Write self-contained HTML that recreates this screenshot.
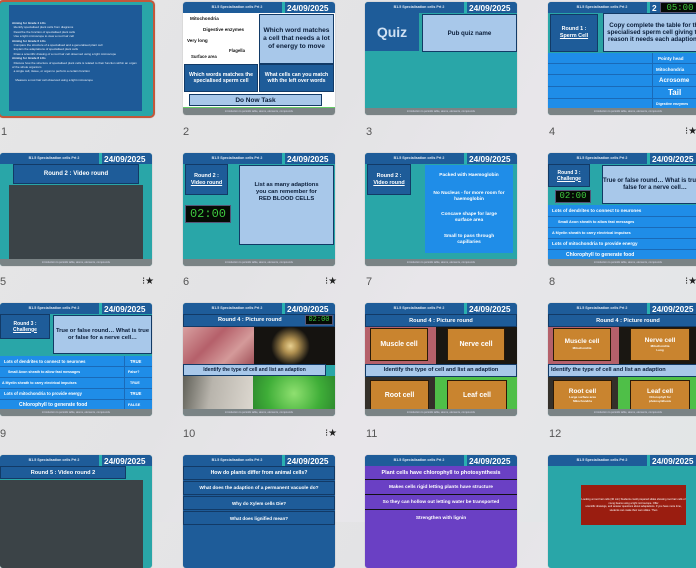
<!DOCTYPE html>
<html><head><meta charset="utf-8"><style>
*{margin:0;padding:0;box-sizing:border-box}
body{width:696px;height:522px;overflow:hidden;background:linear-gradient(120deg,#e6e6e6 0%,#e3e3e5 40%,#e8e6ea 60%,#e2e6e6 100%);font-family:"Liberation Sans",sans-serif;position:relative}
.s{position:absolute;width:152px;height:113px;border-radius:3px;overflow:hidden;background:#29a6a8;box-shadow:0 0 1px rgba(0,0,0,.3)}
.a{position:absolute}
.hd{position:absolute;left:0;top:0;width:100%;height:11px;background:#1e5c99}
.hd .t{position:absolute;left:14px;top:3px;font-size:3.6px;font-weight:bold;color:#dfe8f4;width:80px;text-align:center}
.hd .st{position:absolute;left:99px;top:0;width:3px;height:11px;background:#2ab0b0}
.hd .d{position:absolute;left:104px;top:1px;font-size:8.3px;font-weight:bold;color:#fff}
.ft{position:absolute;left:0;bottom:0;width:100%;height:7px;background:#7a8385;font-size:2.6px;color:#dde;text-align:center;line-height:7px}
.db{background:#1e5c99;color:#fff;font-weight:bold;text-align:center;border:1px solid #123a66}
.lb{background:#a8c8ea;color:#0b1e3a;font-weight:bold;text-align:center;border:1px solid #123a66}
.bb{background:#1f8de8;color:#fff;font-weight:bold;text-align:center}
.or{background:#c9842f;color:#fff;font-weight:bold;text-align:center;border:1px solid #2a1a08;display:flex;flex-direction:column;justify-content:center;align-items:center}
.num{position:absolute;font-size:11px;color:#555}
.star{position:absolute;font-size:10px;color:#222;white-space:nowrap}
.tm{background:#050a05;color:#3fc93f;font-family:"Liberation Mono",monospace;text-align:center;border:1px solid #557}
.c{display:flex;align-items:center;justify-content:center;flex-direction:column}
.row{position:absolute;left:0;width:152px;border-bottom:1px solid #1a6ab8;color:#fff;font-weight:bold;white-space:nowrap}
</style></head><body>

<!-- 1 -->
<div class="s" style="left:-2px;top:0;width:157px;height:118px;border:2px solid #c4573a;border-radius:5px;background:#29a6a8">
 <div class="a" style="left:9px;top:3px;width:133px;height:106px;background:#1e5a98;color:#e8eef8;font-size:3px;line-height:4.4px;padding:16px 2px 0 3px">
 <b>Aiming for Grade 4 LOs</b><br>&nbsp;&nbsp;Identify specialised plant cells from diagrams<br>&nbsp;&nbsp;Describe the function of specialised plant cells<br>&nbsp;&nbsp;Use a light microscope to view a root hair cell<br><b>Aiming for Grade 6 LOs</b><br>&nbsp;&nbsp;Compare the structure of a specialised and a generalised plant cell<br>&nbsp;&nbsp;Explain the adaptations of specialised plant cells<br>&nbsp;&nbsp;Draw a scientific drawing of a root hair cell observed using a light microscope<br><b>Aiming for Grade 8 LOs</b><br>&nbsp;&nbsp;Discuss how the structure of specialised plant cells is related to their function within an organ of the whole organism<br>&nbsp;&nbsp;a single cell, tissue, or organ to perform a certain function<br><br>&nbsp;&nbsp;&nbsp;&nbsp;Measure a root hair cell observed using a light microscope
 </div>
</div>
<div class="num" style="left:1px;top:126px">1</div>

<!-- 2 -->
<div class="s" style="left:183px;top:2px;background:#fff">
 <div class="hd"><div class="t">B1.5 Specialisation cells Prt 2</div><div class="st"></div><div class="d">24/09/2025</div></div>
 <div class="a" style="left:7px;top:14px;font-size:4.6px;font-weight:bold;color:#111">Mitochondria</div>
 <div class="a" style="left:20px;top:25px;font-size:4.6px;font-weight:bold;color:#111">Digestive enzymes</div>
 <div class="a" style="left:4px;top:36px;font-size:4.6px;font-weight:bold;color:#111">Very long</div>
 <div class="a" style="left:46px;top:46px;font-size:4.3px;font-weight:bold;color:#111">Flagella</div>
 <div class="a" style="left:8px;top:52px;font-size:4.3px;font-weight:bold;color:#111">Surface area</div>
 <div class="a lb c" style="left:76px;top:12px;width:75px;height:50px;font-size:6.6px;line-height:8px;padding:0 3px">Which word matches a cell that needs a lot of energy to move</div>
 <div class="a db c" style="left:1px;top:62px;width:74px;height:28px;font-size:5.2px;line-height:6px">Which words matches the specialised sperm cell</div>
 <div class="a db c" style="left:76px;top:62px;width:75px;height:28px;font-size:5.2px;line-height:6px">What cells can you match with the left over words</div>
 <div class="a lb c" style="left:6px;top:92px;width:133px;height:12px;font-size:6.5px">Do Now Task</div>
 <div class="a" style="left:0;top:105px;width:152px;height:1px;background:#6c6"></div>
 <div class="ft">introduction to periodic table, atoms, elements, compounds</div>
</div>
<div class="num" style="left:183px;top:126px">2</div>

<!-- 3 -->
<div class="s" style="left:365px;top:2px">
 <div class="hd"><div class="t">B1.5 Specialisation cells Prt 2</div><div class="st"></div><div class="d">24/09/2025</div></div>
 <div class="a c" style="left:0;top:11px;width:54px;height:38px;background:#1e5c99;color:#cfe0f2;font-weight:bold;font-size:14px">Quiz</div>
 <div class="a" style="left:54px;top:11px;width:4px;height:38px;background:#2aa3a3"></div>
 <div class="a lb c" style="left:57px;top:12px;width:95px;height:38px;font-size:6.2px">Pub quiz name</div>
 <div class="ft">introduction to periodic table, atoms, elements, compounds</div>
</div>
<div class="num" style="left:366px;top:126px">3</div>

<!-- 4 -->
<div class="s" style="left:548px;top:2px;width:160px">
 <div class="hd"><div class="t">B1.5 Specialisation cells Prt 2</div><div class="st"></div><div class="d">2</div>
 <div class="a tm" style="left:112px;top:0;width:40px;height:11px;font-size:9px;line-height:10px">05:00</div></div>
 <div class="a db c" style="left:2px;top:12px;width:48px;height:38px;font-size:5.4px;line-height:7px">Round 1 :<br><u>Sperm Cell</u></div>
 <div class="a" style="left:51px;top:11px;width:4px;height:40px;background:#2aa3a3"></div>
 <div class="a lb c" style="left:55px;top:11px;width:105px;height:39px;font-size:6.2px;line-height:7px">Copy complete the table for the specialised sperm cell giving the reason it needs each adaption…</div>
 <div class="a" style="left:0;top:51px;width:160px;height:57px;background:#1f8de8"></div>
 <div class="row" style="top:51px;height:11px"><span class="a" style="left:110px;top:3px;font-size:4.5px">Pointy head</span></div>
 <div class="row" style="top:62px;height:11px"><span class="a" style="left:108px;top:3px;font-size:4.5px">Mitochondria</span></div>
 <div class="row" style="top:73px;height:12px"><span class="a" style="left:111px;top:2px;font-size:6.2px">Acrosome</span></div>
 <div class="row" style="top:85px;height:12px"><span class="a" style="left:120px;top:1px;font-size:8px">Tail</span></div>
 <div class="row" style="top:97px;height:11px;border:none"><span class="a" style="left:108px;top:3px;font-size:3.6px">Digestive enzymes</span></div>
 <div class="a" style="left:104px;top:51px;width:1px;height:57px;background:#1a6ab8"></div>
 <div class="ft">introduction to periodic table, atoms, elements, compounds</div>
</div>
<div class="num" style="left:549px;top:126px">4</div>
<div class="star" style="left:685px;top:126px">⁝★</div>

<!-- 5 -->
<div class="s" style="left:0;top:153px">
 <div class="hd"><div class="t">B1.5 Specialisation cells Prt 2</div><div class="st"></div><div class="d">24/09/2025</div></div>
 <div class="a db c" style="left:13px;top:11px;width:126px;height:20px;font-size:6px">Round 2 : Video round</div>
 <div class="a" style="left:9px;top:32px;width:134px;height:76px;background:#3b4347"></div>
 <div class="ft">introduction to periodic table, atoms, elements, compounds</div>
</div>
<div class="num" style="left:0;top:276px">5</div>
<div class="star" style="left:142px;top:276px">⁝★</div>

<!-- 6 -->
<div class="s" style="left:183px;top:153px">
 <div class="hd"><div class="t">B1.5 Specialisation cells Prt 2</div><div class="st"></div><div class="d">24/09/2025</div></div>
 <div class="a db c" style="left:2px;top:11px;width:43px;height:31px;font-size:5.4px;line-height:7px">Round 2 :<br><u>Video round</u></div>
 <div class="a tm" style="left:2px;top:52px;width:46px;height:18px;font-size:12px;line-height:16px">02:00</div>
 <div class="a lb c" style="left:56px;top:12px;width:95px;height:80px;font-size:5.8px;line-height:7px;padding:0 12px 26px">List as many adaptions you can remember for RED BLOOD CELLS</div>
 <div class="ft">introduction to periodic table, atoms, elements, compounds</div>
</div>
<div class="num" style="left:183px;top:276px">6</div>
<div class="star" style="left:325px;top:276px">⁝★</div>

<!-- 7 -->
<div class="s" style="left:365px;top:153px">
 <div class="hd"><div class="t">B1.5 Specialisation cells Prt 2</div><div class="st"></div><div class="d">24/09/2025</div></div>
 <div class="a db c" style="left:2px;top:11px;width:44px;height:31px;font-size:5.4px;line-height:7px">Round 2 :<br><u>Video round</u></div>
 <div class="a bb" style="left:60px;top:12px;width:88px;height:88px"></div>
 <div class="a c" style="left:60px;top:14px;width:88px;height:16px;font-size:4.8px;color:#fff;font-weight:bold">Packed with Haemoglobin</div>
 <div class="a c" style="left:60px;top:36px;width:88px;height:16px;font-size:4.8px;color:#fff;font-weight:bold;line-height:6px;text-align:center">No Nucleus - for more room for haemoglobin</div>
 <div class="a c" style="left:60px;top:57px;width:88px;height:16px;font-size:4.8px;color:#fff;font-weight:bold;line-height:6px;text-align:center;padding:0 8px">Concave shape for large surface area</div>
 <div class="a c" style="left:60px;top:79px;width:88px;height:16px;font-size:4.8px;color:#fff;font-weight:bold;line-height:6px;text-align:center;padding:0 12px">Small to pass through capillaries</div>
 <div class="ft">introduction to periodic table, atoms, elements, compounds</div>
</div>
<div class="num" style="left:366px;top:276px">7</div>

<!-- 8 -->
<div class="s" style="left:548px;top:153px;width:160px">
 <div class="hd"><div class="t">B1.5 Specialisation cells Prt 2</div><div class="st"></div><div class="d">24/09/2025</div></div>
 <div class="a db c" style="left:0;top:11px;width:42px;height:23px;font-size:5px;line-height:6px">Round 3 :<br><u>Challenge</u></div>
 <div class="a tm" style="left:7px;top:37px;width:36px;height:13px;font-size:9px;line-height:11px">02:00</div>
 <div class="a lb c" style="left:54px;top:12px;width:106px;height:39px;font-size:6px;line-height:7px">True or false round… What is true or false for a nerve cell…</div>
 <div class="a" style="left:0;top:52px;width:160px;height:56px;background:#1f8de8"></div>
 <div class="row" style="top:52px;height:12px;font-size:4.6px;padding:3px 0 0 4px">Lots of dendrites to connect to neurones</div>
 <div class="row" style="top:64px;height:11px;font-size:3.8px;padding:3px 0 0 10px">Small Axon sheath to allow fast messages</div>
 <div class="row" style="top:75px;height:11px;font-size:3.8px;padding:3px 0 0 4px">A Myelin sheath to carry electrical impulses</div>
 <div class="row" style="top:86px;height:11px;font-size:4.6px;padding:2px 0 0 4px">Lots of mitochondria to provide energy</div>
 <div class="row" style="top:97px;height:11px;font-size:5px;padding:2px 0 0 18px;border:none">Chlorophyll to generate food</div>
 <div class="ft">introduction to periodic table, atoms, elements, compounds</div>
</div>
<div class="num" style="left:549px;top:276px">8</div>
<div class="star" style="left:685px;top:276px">⁝★</div>

<!-- 9 -->
<div class="s" style="left:0;top:303px">
 <div class="hd"><div class="t">B1.5 Specialisation cells Prt 2</div><div class="st"></div><div class="d">24/09/2025</div></div>
 <div class="a db c" style="left:0;top:11px;width:50px;height:25px;font-size:5px;line-height:6px">Round 3 :<br><u>Challenge</u></div>
 <div class="a lb c" style="left:53px;top:12px;width:99px;height:39px;font-size:5.8px;line-height:7px">True or false round… What is true or false for a nerve cell…</div>
 <div class="a" style="left:0;top:53px;width:152px;height:55px;background:#1f8de8"></div>
 <div class="row" style="top:53px;height:11px;font-size:4.2px;padding:3px 0 0 4px">Lots of dendrites to connect to neurones<span class="a" style="left:130px">TRUE</span></div>
 <div class="row" style="top:64px;height:11px;font-size:3.6px;padding:3px 0 0 8px">Small Axon sheath to allow fast messages<span class="a" style="left:128px">False?</span></div>
 <div class="row" style="top:75px;height:11px;font-size:3.6px;padding:3px 0 0 2px">A Myelin sheath to carry electrical impulses<span class="a" style="left:130px">TRUE</span></div>
 <div class="row" style="top:86px;height:11px;font-size:4.2px;padding:2px 0 0 4px">Lots of mitochondria to provide energy<span class="a" style="left:130px">TRUE</span></div>
 <div class="row" style="top:97px;height:11px;font-size:5px;padding:2px 0 0 19px;border:none">Chlorophyll to generate food<span class="a" style="left:128px;font-size:3.8px;top:3px">FALSE</span></div>
 <div class="a" style="left:124px;top:53px;width:1px;height:55px;background:#1a6ab8"></div>
 <div class="ft">introduction to periodic table, atoms, elements, compounds</div>
</div>
<div class="num" style="left:0;top:428px">9</div>

<!-- 10 -->
<div class="s" style="left:183px;top:303px">
 <div class="hd"><div class="t">B1.5 Specialisation cells Prt 2</div><div class="st"></div><div class="d">24/09/2025</div></div>
 <div class="a db" style="left:0;top:11px;width:152px;height:13px;font-size:5.6px;line-height:11px;text-align:left;padding-left:34px">Round 4 : Picture round</div>
 <div class="a tm" style="left:122px;top:12px;width:28px;height:10px;font-size:7px;line-height:8px">02:00</div>
 <div class="a" style="left:0;top:24px;width:71px;height:38px;background:linear-gradient(135deg,#d8a0a0,#b5606a 40%,#d49a9a 70%,#a05058)"></div>
 <div class="a" style="left:71px;top:24px;width:81px;height:38px;background:radial-gradient(circle at 45% 50%,#e8d090 0,#b09050 15%,#151310 40%)"></div>
 <div class="a lb" style="left:0;top:61px;width:143px;height:12px;font-size:5px;line-height:10px">Identify the type of cell and list an adaption</div>
 <div class="a" style="left:0;top:73px;width:70px;height:35px;background:linear-gradient(100deg,#606058,#b8b4ac 40%,#ddd8d0)"></div>
 <div class="a" style="left:70px;top:73px;width:82px;height:35px;background:radial-gradient(circle,#8fe070,#3fae38 60%,#2e8a2e)"></div>
 <div class="ft">introduction to periodic table, atoms, elements, compounds</div>
</div>
<div class="num" style="left:183px;top:428px">10</div>
<div class="star" style="left:325px;top:428px">⁝★</div>

<!-- 11 -->
<div class="s" style="left:365px;top:303px">
 <div class="hd"><div class="t">B1.5 Specialisation cells Prt 2</div><div class="st"></div><div class="d">24/09/2025</div></div>
 <div class="a db c" style="left:0;top:11px;width:152px;height:13px;font-size:5.6px">Round 4 : Picture round</div>
 <div class="a" style="left:0;top:24px;width:71px;height:38px;background:#b5606a"></div>
 <div class="a" style="left:71px;top:24px;width:81px;height:38px;background:#1a1712"></div>
 <div class="a or" style="left:5px;top:25px;width:58px;height:33px;font-size:7px">Muscle cell</div>
 <div class="a or" style="left:82px;top:25px;width:58px;height:33px;font-size:7px">Nerve cell</div>
 <div class="a lb" style="left:0;top:61px;width:152px;height:13px;font-size:5.6px;line-height:11px">Identify the type of cell and list an adaption</div>
 <div class="a" style="left:0;top:74px;width:70px;height:34px;background:#34302a"></div>
 <div class="a" style="left:70px;top:74px;width:82px;height:34px;background:#4fbf48"></div>
 <div class="a or" style="left:5px;top:77px;width:59px;height:31px;font-size:7px">Root cell</div>
 <div class="a or" style="left:82px;top:77px;width:60px;height:31px;font-size:7px">Leaf cell</div>
 <div class="ft">introduction to periodic table, atoms, elements, compounds</div>
</div>
<div class="num" style="left:366px;top:428px">11</div>

<!-- 12 -->
<div class="s" style="left:548px;top:303px;width:160px">
 <div class="hd"><div class="t">B1.5 Specialisation cells Prt 2</div><div class="st"></div><div class="d">24/09/2025</div></div>
 <div class="a db c" style="left:0;top:11px;width:160px;height:13px;font-size:5.6px">Round 4 : Picture round</div>
 <div class="a" style="left:0;top:24px;width:71px;height:38px;background:#b5606a"></div>
 <div class="a" style="left:71px;top:24px;width:89px;height:38px;background:#1a1712"></div>
 <div class="a or" style="left:5px;top:25px;width:58px;height:33px;font-size:6.5px;line-height:7px">Muscle cell<span style="font-size:3px">Mitochondria</span></div>
 <div class="a or" style="left:82px;top:25px;width:60px;height:33px;font-size:6.5px;line-height:7px">Nerve cell<span style="font-size:3px;line-height:4px">Mitochondria<br>Long</span></div>
 <div class="a lb" style="left:0;top:61px;width:160px;height:13px;font-size:5.6px;line-height:11px;text-align:left;padding-left:2px">Identify the type of cell and list an adaption</div>
 <div class="a" style="left:0;top:74px;width:70px;height:34px;background:#34302a"></div>
 <div class="a" style="left:70px;top:74px;width:90px;height:34px;background:#4fbf48"></div>
 <div class="a or" style="left:5px;top:77px;width:59px;height:31px;font-size:6.5px;line-height:7px">Root cell<span style="font-size:3px;line-height:4px">Large surface area<br>Mitochondria</span></div>
 <div class="a or" style="left:82px;top:77px;width:60px;height:31px;font-size:6.5px;line-height:7px">Leaf cell<span style="font-size:3px;line-height:4px">Chlorophyll for<br>photosynthesis</span></div>
 <div class="ft">introduction to periodic table, atoms, elements, compounds</div>
</div>
<div class="num" style="left:549px;top:428px">12</div>

<!-- 13 -->
<div class="s" style="left:0;top:455px">
 <div class="hd"><div class="t">B1.5 Specialisation cells Prt 2</div><div class="st"></div><div class="d">24/09/2025</div></div>
 <div class="a db c" style="left:0;top:11px;width:126px;height:13px;font-size:5.6px">Round 5 : Video round 2</div>
 <div class="a" style="left:0;top:25px;width:143px;height:88px;background:#3b4347"></div>
</div>

<!-- 14 -->
<div class="s" style="left:183px;top:455px;background:#1e5c99">
 <div class="hd"><div class="t">B1.5 Specialisation cells Prt 2</div><div class="st"></div><div class="d">24/09/2025</div></div>
 <div class="a db c" style="left:0;top:11px;width:152px;height:14px;font-size:5.2px">How do plants differ from animal cells?</div>
 <div class="a db c" style="left:0;top:26px;width:152px;height:14px;font-size:4.8px">What does the adaption of a permanent vacuole do?</div>
 <div class="a db c" style="left:0;top:41px;width:152px;height:14px;font-size:4.6px">Why do Xylem cells Die?</div>
 <div class="a db c" style="left:0;top:56px;width:152px;height:14px;font-size:4.6px">What does lignified mean?</div>
</div>

<!-- 15 -->
<div class="s" style="left:365px;top:455px;background:#6a40c4">
 <div class="hd"><div class="t">B1.5 Specialisation cells Prt 2</div><div class="st"></div><div class="d">24/09/2025</div></div>
 <div class="a c" style="left:0;top:11px;width:152px;height:14px;font-size:5.4px;color:#fff;font-weight:bold;border-bottom:1px solid #111">Plant cells have chlorophyll to photosynthesis</div>
 <div class="a c" style="left:0;top:26px;width:152px;height:14px;font-size:4.8px;color:#fff;font-weight:bold;border-bottom:1px solid #111">Makes cells rigid letting plants have structure</div>
 <div class="a c" style="left:0;top:41px;width:152px;height:14px;font-size:4.8px;color:#fff;font-weight:bold;border-bottom:1px solid #111">So they can hollow out letting water be transported</div>
 <div class="a c" style="left:0;top:56px;width:152px;height:14px;font-size:4.8px;color:#fff;font-weight:bold">Strengthen with lignin</div>
</div>

<!-- 16 -->
<div class="s" style="left:548px;top:455px;width:160px">
 <div class="hd"><div class="t">B1.5 Specialisation cells Prt 2</div><div class="st"></div><div class="d">24/09/2025</div></div>
 <div class="a" style="left:33px;top:30px;width:105px;height:40px;background:#9a1d10;color:#fff;font-size:2.6px;line-height:3.6px;text-align:center;padding-top:13px">Looking at root hair cells (30 min) Students could prepared slides showing root hair cells of mung beans using a light microscope. Offer<br>scientific drawings, and answer questions about adaptations. If you have more time, students can make their own slides. Then</div>
</div>

</body></html>
